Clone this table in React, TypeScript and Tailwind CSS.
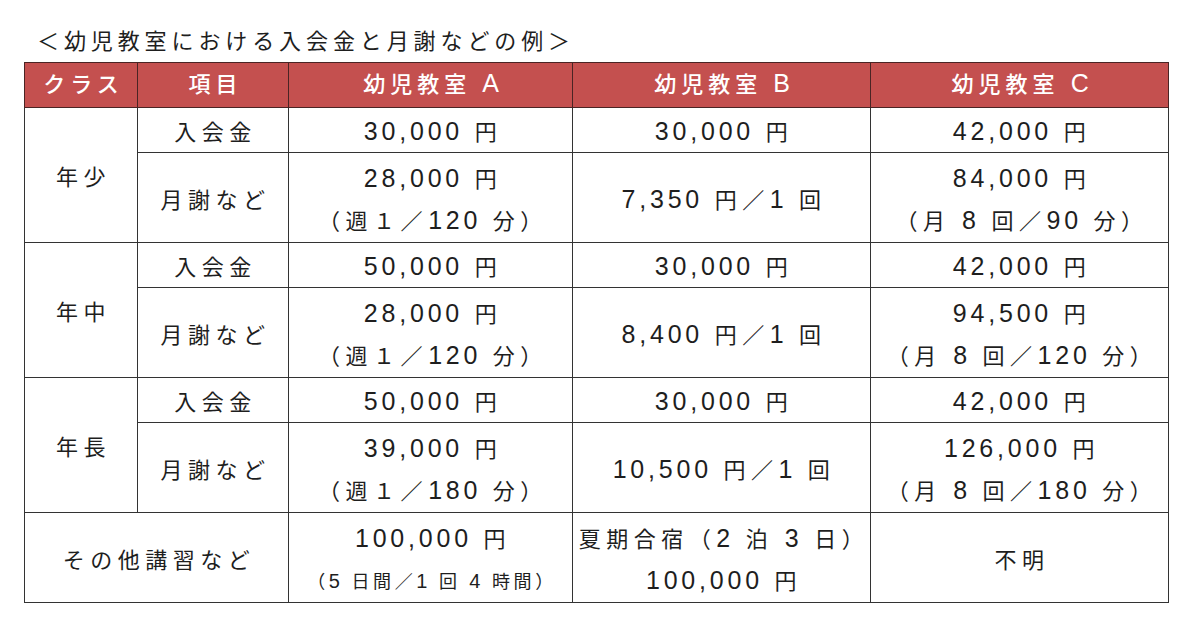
import React from "react";

const F = { fontFamily: '"Liberation Sans", "Noto Sans CJK JP", sans-serif' };

const td = "border border-[#333] text-center align-middle p-0 overflow-hidden";
const tx = "h-[42px] text-[22px] leading-[42px] tracking-[5.5px] pl-[5px] text-[#1e1e1e] whitespace-nowrap";

function rich(s: string, big: string) {
  const parts = s.split(/([0-9,]+|[A-C])/);
  return parts.map((p, i) =>
    i % 2 === 1 ? (
      <span key={i} className={big}>
        {p}
      </span>
    ) : (
      <React.Fragment key={i}>{p}</React.Fragment>
    )
  );
}

function Cell({ lines, rowSpan, colSpan, h, small }: { lines: string[]; rowSpan?: number; colSpan?: number; h: string; small?: string }) {
  return (
    <td rowSpan={rowSpan} colSpan={colSpan} className={`${td} ${h}`}>
      <div className="flex flex-col items-center justify-center translate-y-[3px]">
        {lines.map((l, i) =>
          l === small ? (
            <div key={i} className="h-[42px] text-[18px] leading-[42px] tracking-[3.6px] pl-[3px] text-[#1e1e1e] whitespace-nowrap">
              {rich(l, "text-[20px] tracking-[3px] leading-none")}
            </div>
          ) : (
            <div key={i} className={tx}>
              {rich(l, "text-[25px] tracking-[3.8px] leading-none")}
            </div>
          )
        )}
      </div>
    </td>
  );
}

type Group = {
  name: string;
  fee: [string, string, string];
  monthly: [string[], string[], string[]];
};

const groups: Group[] = [
  {
    name: "年少",
    fee: ["30,000 円", "30,000 円", "42,000 円"],
    monthly: [["28,000 円", "（週１／120 分）"], ["7,350 円／1 回"], ["84,000 円", "（月 8 回／90 分）"]],
  },
  {
    name: "年中",
    fee: ["50,000 円", "30,000 円", "42,000 円"],
    monthly: [["28,000 円", "（週１／120 分）"], ["8,400 円／1 回"], ["94,500 円", "（月 8 回／120 分）"]],
  },
  {
    name: "年長",
    fee: ["50,000 円", "30,000 円", "42,000 円"],
    monthly: [["39,000 円", "（週１／180 分）"], ["10,500 円／1 回"], ["126,000 円", "（月 8 回／180 分）"]],
  },
];

export default function App() {
  return (
    <div className="w-[1200px] h-[626px] bg-white pt-[28px]" style={F}>
      <div className="pl-[37px] text-[22px] leading-[28px] tracking-[4.9px] text-[#1e1e1e] mb-[6px]">
        ＜幼児教室における入会金と月謝などの例＞
      </div>
      <table className="ml-[24px] w-[1144px] table-fixed border-collapse">
        <colgroup>
          <col className="w-[113px]" />
          <col className="w-[151px]" />
          <col className="w-[284px]" />
          <col className="w-[298px]" />
          <col className="w-[298px]" />
        </colgroup>
        <thead>
          <tr className="h-[45px] bg-[#c4504f]">
            {["クラス", "項目", "幼児教室 A", "幼児教室 B", "幼児教室 C"].map((t) => (
              <th key={t} className="h-[45px] border border-[#4a2424] p-0 text-center align-middle font-medium text-white text-[22px] leading-[40px] tracking-[5px] pl-[5px]">
                {rich(t, "text-[25px] tracking-[3.8px] leading-none")}
              </th>
            ))}
          </tr>
        </thead>
        <tbody>
          {groups.map((g) => (
            <React.Fragment key={g.name}>
              <tr className="h-[45px]">
                <Cell rowSpan={2} lines={[g.name]} h="" />
                <Cell lines={["入会金"]} h="h-[45px]" />
                {g.fee.map((f, i) => (
                  <Cell key={i} lines={[f]} h="h-[45px]" />
                ))}
              </tr>
              <tr className="h-[90px]">
                <Cell lines={["月謝など"]} h="h-[90px]" />
                {g.monthly.map((m, i) => (
                  <Cell key={i} lines={m} h="h-[90px]" />
                ))}
              </tr>
            </React.Fragment>
          ))}
          <tr className="h-[90px]">
            <Cell colSpan={2} lines={["その他講習など"]} h="h-[90px]" />
            <Cell lines={["100,000 円", "（5 日間／1 回 4 時間）"]} small="（5 日間／1 回 4 時間）" h="h-[90px]" />
            <Cell lines={["夏期合宿（2 泊 3 日）", "100,000 円"]} h="h-[90px]" />
            <Cell lines={["不明"]} h="h-[90px]" />
          </tr>
        </tbody>
      </table>
    </div>
  );
}
